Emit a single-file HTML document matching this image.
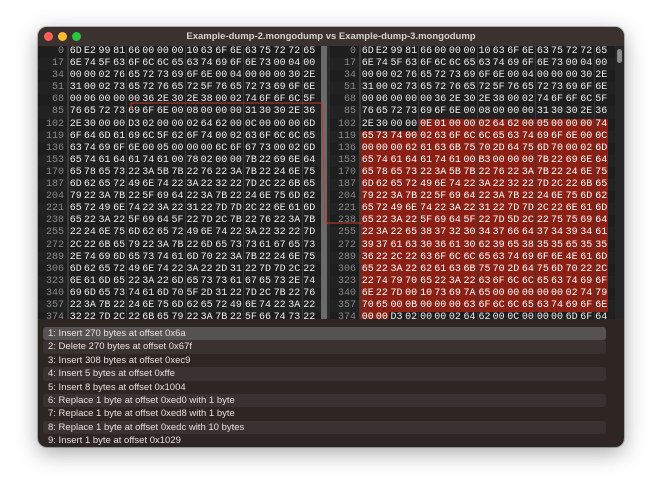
<!DOCTYPE html>
<html><head><meta charset="utf-8"><style>
*{margin:0;padding:0;box-sizing:border-box}
body{width:663px;height:500px;background:#fff;position:relative;overflow:hidden;font-family:"Liberation Sans",sans-serif}
.win{position:absolute;left:38px;top:27px;width:586px;height:420px;border-radius:9px;background:#2e2623;overflow:hidden;box-shadow:0 6px 22px rgba(0,0,0,.35),0 0 0 1px rgba(0,0,0,.25)}
.tb{position:absolute;left:0;top:0;width:586px;height:19px;background:#3b312e;color:#d8d1ce;font-weight:bold;font-size:9.5px;text-align:center;line-height:19px}
.dot{position:absolute;top:5px;width:9px;height:9px;border-radius:50%}
.pane{position:absolute;top:19px;height:273px;background:#1e1e1e;overflow:hidden;font-family:"Liberation Mono",monospace;font-size:10px;color:#ececec}
.row{height:12.1px;line-height:12.1px;display:flex;white-space:nowrap}
.row:nth-child(even){background:#222}
.row b{font-weight:normal;width:30px;text-align:right;padding-right:3px;color:#8a8a8a;border-right:1px solid #3a3a3a;flex:none}
.row i{font-style:normal;width:14.6px;text-align:center;flex:none}
.row i:nth-of-type(4n+1){border-left:1px solid #3a3a3a}
.row i.r{background:#8c1f13;color:#fff}
.sb{position:absolute;top:19px;height:273px}
.list{position:absolute;left:5px;top:300px;width:563px;font-size:9.5px;color:#e6e0dd}
.list div{height:13.4px;line-height:13.4px;padding-left:5px;border-radius:3px}
.list div:nth-child(even){background:#3a3230}
.list div.sel{background:#565251}
</style></head><body>
<div class="win">
<div class="tb">Example-dump-2.mongodump vs Example-dump-3.mongodump</div>
<div class="dot" style="left:6px;background:#ff5f57"></div>
<div class="dot" style="left:20px;background:#febc2e"></div>
<div class="dot" style="left:34px;background:#28c840"></div>

<div class="pane" style="left:0;width:283px">
<div class="row"><b>0</b><i>6D</i><i>E2</i><i>99</i><i>81</i><i>66</i><i>00</i><i>00</i><i>00</i><i>10</i><i>63</i><i>6F</i><i>6E</i><i>63</i><i>75</i><i>72</i><i>72</i><i>65</i></div>
<div class="row"><b>17</b><i>6E</i><i>74</i><i>5F</i><i>63</i><i>6F</i><i>6C</i><i>6C</i><i>65</i><i>63</i><i>74</i><i>69</i><i>6F</i><i>6E</i><i>73</i><i>00</i><i>04</i><i>00</i></div>
<div class="row"><b>34</b><i>00</i><i>00</i><i>02</i><i>76</i><i>65</i><i>72</i><i>73</i><i>69</i><i>6F</i><i>6E</i><i>00</i><i>04</i><i>00</i><i>00</i><i>00</i><i>30</i><i>2E</i></div>
<div class="row"><b>51</b><i>31</i><i>00</i><i>02</i><i>73</i><i>65</i><i>72</i><i>76</i><i>65</i><i>72</i><i>5F</i><i>76</i><i>65</i><i>72</i><i>73</i><i>69</i><i>6F</i><i>6E</i></div>
<div class="row"><b>68</b><i>00</i><i>06</i><i>00</i><i>00</i><i>00</i><i>36</i><i>2E</i><i>30</i><i>2E</i><i>38</i><i>00</i><i>02</i><i>74</i><i>6F</i><i>6F</i><i>6C</i><i>5F</i></div>
<div class="row"><b>85</b><i>76</i><i>65</i><i>72</i><i>73</i><i>69</i><i>6F</i><i>6E</i><i>00</i><i>08</i><i>00</i><i>00</i><i>00</i><i>31</i><i>30</i><i>30</i><i>2E</i><i>36</i></div>
<div class="row"><b>102</b><i>2E</i><i>30</i><i>00</i><i>00</i><i>D3</i><i>02</i><i>00</i><i>00</i><i>02</i><i>64</i><i>62</i><i>00</i><i>0C</i><i>00</i><i>00</i><i>00</i><i>6D</i></div>
<div class="row"><b>119</b><i>6F</i><i>64</i><i>6D</i><i>61</i><i>69</i><i>6C</i><i>5F</i><i>62</i><i>6F</i><i>74</i><i>00</i><i>02</i><i>63</i><i>6F</i><i>6C</i><i>6C</i><i>65</i></div>
<div class="row"><b>136</b><i>63</i><i>74</i><i>69</i><i>6F</i><i>6E</i><i>00</i><i>05</i><i>00</i><i>00</i><i>00</i><i>6C</i><i>6F</i><i>67</i><i>73</i><i>00</i><i>02</i><i>6D</i></div>
<div class="row"><b>153</b><i>65</i><i>74</i><i>61</i><i>64</i><i>61</i><i>74</i><i>61</i><i>00</i><i>78</i><i>02</i><i>00</i><i>00</i><i>7B</i><i>22</i><i>69</i><i>6E</i><i>64</i></div>
<div class="row"><b>170</b><i>65</i><i>78</i><i>65</i><i>73</i><i>22</i><i>3A</i><i>5B</i><i>7B</i><i>22</i><i>76</i><i>22</i><i>3A</i><i>7B</i><i>22</i><i>24</i><i>6E</i><i>75</i></div>
<div class="row"><b>187</b><i>6D</i><i>62</i><i>65</i><i>72</i><i>49</i><i>6E</i><i>74</i><i>22</i><i>3A</i><i>22</i><i>32</i><i>22</i><i>7D</i><i>2C</i><i>22</i><i>6B</i><i>65</i></div>
<div class="row"><b>204</b><i>79</i><i>22</i><i>3A</i><i>7B</i><i>22</i><i>5F</i><i>69</i><i>64</i><i>22</i><i>3A</i><i>7B</i><i>22</i><i>24</i><i>6E</i><i>75</i><i>6D</i><i>62</i></div>
<div class="row"><b>221</b><i>65</i><i>72</i><i>49</i><i>6E</i><i>74</i><i>22</i><i>3A</i><i>22</i><i>31</i><i>22</i><i>7D</i><i>7D</i><i>2C</i><i>22</i><i>6E</i><i>61</i><i>6D</i></div>
<div class="row"><b>238</b><i>65</i><i>22</i><i>3A</i><i>22</i><i>5F</i><i>69</i><i>64</i><i>5F</i><i>22</i><i>7D</i><i>2C</i><i>7B</i><i>22</i><i>76</i><i>22</i><i>3A</i><i>7B</i></div>
<div class="row"><b>255</b><i>22</i><i>24</i><i>6E</i><i>75</i><i>6D</i><i>62</i><i>65</i><i>72</i><i>49</i><i>6E</i><i>74</i><i>22</i><i>3A</i><i>22</i><i>32</i><i>22</i><i>7D</i></div>
<div class="row"><b>272</b><i>2C</i><i>22</i><i>6B</i><i>65</i><i>79</i><i>22</i><i>3A</i><i>7B</i><i>22</i><i>6D</i><i>65</i><i>73</i><i>73</i><i>61</i><i>67</i><i>65</i><i>73</i></div>
<div class="row"><b>289</b><i>2E</i><i>74</i><i>69</i><i>6D</i><i>65</i><i>73</i><i>74</i><i>61</i><i>6D</i><i>70</i><i>22</i><i>3A</i><i>7B</i><i>22</i><i>24</i><i>6E</i><i>75</i></div>
<div class="row"><b>306</b><i>6D</i><i>62</i><i>65</i><i>72</i><i>49</i><i>6E</i><i>74</i><i>22</i><i>3A</i><i>22</i><i>2D</i><i>31</i><i>22</i><i>7D</i><i>7D</i><i>2C</i><i>22</i></div>
<div class="row"><b>323</b><i>6E</i><i>61</i><i>6D</i><i>65</i><i>22</i><i>3A</i><i>22</i><i>6D</i><i>65</i><i>73</i><i>73</i><i>61</i><i>67</i><i>65</i><i>73</i><i>2E</i><i>74</i></div>
<div class="row"><b>340</b><i>69</i><i>6D</i><i>65</i><i>73</i><i>74</i><i>61</i><i>6D</i><i>70</i><i>5F</i><i>2D</i><i>31</i><i>22</i><i>7D</i><i>2C</i><i>7B</i><i>22</i><i>76</i></div>
<div class="row"><b>357</b><i>22</i><i>3A</i><i>7B</i><i>22</i><i>24</i><i>6E</i><i>75</i><i>6D</i><i>62</i><i>65</i><i>72</i><i>49</i><i>6E</i><i>74</i><i>22</i><i>3A</i><i>22</i></div>
<div class="row"><b>374</b><i>32</i><i>22</i><i>7D</i><i>2C</i><i>22</i><i>6B</i><i>65</i><i>79</i><i>22</i><i>3A</i><i>7B</i><i>22</i><i>5F</i><i>66</i><i>74</i><i>73</i><i>22</i></div>
</div>
<div class="sb" style="left:283px;width:6px;background:#6a6a6a"></div>
<div class="sb" style="left:289px;width:3px;background:#2a2a2a"></div>

<div class="pane" style="left:292px;width:285px">
<div class="row"><b>0</b><i>6D</i><i>E2</i><i>99</i><i>81</i><i>66</i><i>00</i><i>00</i><i>00</i><i>10</i><i>63</i><i>6F</i><i>6E</i><i>63</i><i>75</i><i>72</i><i>72</i><i>65</i></div>
<div class="row"><b>17</b><i>6E</i><i>74</i><i>5F</i><i>63</i><i>6F</i><i>6C</i><i>6C</i><i>65</i><i>63</i><i>74</i><i>69</i><i>6F</i><i>6E</i><i>73</i><i>00</i><i>04</i><i>00</i></div>
<div class="row"><b>34</b><i>00</i><i>00</i><i>02</i><i>76</i><i>65</i><i>72</i><i>73</i><i>69</i><i>6F</i><i>6E</i><i>00</i><i>04</i><i>00</i><i>00</i><i>00</i><i>30</i><i>2E</i></div>
<div class="row"><b>51</b><i>31</i><i>00</i><i>02</i><i>73</i><i>65</i><i>72</i><i>76</i><i>65</i><i>72</i><i>5F</i><i>76</i><i>65</i><i>72</i><i>73</i><i>69</i><i>6F</i><i>6E</i></div>
<div class="row"><b>68</b><i>00</i><i>06</i><i>00</i><i>00</i><i>00</i><i>36</i><i>2E</i><i>30</i><i>2E</i><i>38</i><i>00</i><i>02</i><i>74</i><i>6F</i><i>6F</i><i>6C</i><i>5F</i></div>
<div class="row"><b>85</b><i>76</i><i>65</i><i>72</i><i>73</i><i>69</i><i>6F</i><i>6E</i><i>00</i><i>08</i><i>00</i><i>00</i><i>00</i><i>31</i><i>30</i><i>30</i><i>2E</i><i>36</i></div>
<div class="row"><b>102</b><i>2E</i><i>30</i><i>00</i><i>00</i><i class="r">0E</i><i class="r">01</i><i class="r">00</i><i class="r">00</i><i class="r">02</i><i class="r">64</i><i class="r">62</i><i class="r">00</i><i class="r">05</i><i class="r">00</i><i class="r">00</i><i class="r">00</i><i class="r">74</i></div>
<div class="row"><b>119</b><i class="r">65</i><i class="r">73</i><i class="r">74</i><i class="r">00</i><i class="r">02</i><i class="r">63</i><i class="r">6F</i><i class="r">6C</i><i class="r">6C</i><i class="r">65</i><i class="r">63</i><i class="r">74</i><i class="r">69</i><i class="r">6F</i><i class="r">6E</i><i class="r">00</i><i class="r">0C</i></div>
<div class="row"><b>136</b><i class="r">00</i><i class="r">00</i><i class="r">00</i><i class="r">62</i><i class="r">61</i><i class="r">63</i><i class="r">6B</i><i class="r">75</i><i class="r">70</i><i class="r">2D</i><i class="r">64</i><i class="r">75</i><i class="r">6D</i><i class="r">70</i><i class="r">00</i><i class="r">02</i><i class="r">6D</i></div>
<div class="row"><b>153</b><i class="r">65</i><i class="r">74</i><i class="r">61</i><i class="r">64</i><i class="r">61</i><i class="r">74</i><i class="r">61</i><i class="r">00</i><i class="r">B3</i><i class="r">00</i><i class="r">00</i><i class="r">00</i><i class="r">7B</i><i class="r">22</i><i class="r">69</i><i class="r">6E</i><i class="r">64</i></div>
<div class="row"><b>170</b><i class="r">65</i><i class="r">78</i><i class="r">65</i><i class="r">73</i><i class="r">22</i><i class="r">3A</i><i class="r">5B</i><i class="r">7B</i><i class="r">22</i><i class="r">76</i><i class="r">22</i><i class="r">3A</i><i class="r">7B</i><i class="r">22</i><i class="r">24</i><i class="r">6E</i><i class="r">75</i></div>
<div class="row"><b>187</b><i class="r">6D</i><i class="r">62</i><i class="r">65</i><i class="r">72</i><i class="r">49</i><i class="r">6E</i><i class="r">74</i><i class="r">22</i><i class="r">3A</i><i class="r">22</i><i class="r">32</i><i class="r">22</i><i class="r">7D</i><i class="r">2C</i><i class="r">22</i><i class="r">6B</i><i class="r">65</i></div>
<div class="row"><b>204</b><i class="r">79</i><i class="r">22</i><i class="r">3A</i><i class="r">7B</i><i class="r">22</i><i class="r">5F</i><i class="r">69</i><i class="r">64</i><i class="r">22</i><i class="r">3A</i><i class="r">7B</i><i class="r">22</i><i class="r">24</i><i class="r">6E</i><i class="r">75</i><i class="r">6D</i><i class="r">62</i></div>
<div class="row"><b>221</b><i class="r">65</i><i class="r">72</i><i class="r">49</i><i class="r">6E</i><i class="r">74</i><i class="r">22</i><i class="r">3A</i><i class="r">22</i><i class="r">31</i><i class="r">22</i><i class="r">7D</i><i class="r">7D</i><i class="r">2C</i><i class="r">22</i><i class="r">6E</i><i class="r">61</i><i class="r">6D</i></div>
<div class="row"><b>238</b><i class="r">65</i><i class="r">22</i><i class="r">3A</i><i class="r">22</i><i class="r">5F</i><i class="r">69</i><i class="r">64</i><i class="r">5F</i><i class="r">22</i><i class="r">7D</i><i class="r">5D</i><i class="r">2C</i><i class="r">22</i><i class="r">75</i><i class="r">75</i><i class="r">69</i><i class="r">64</i></div>
<div class="row"><b>255</b><i class="r">22</i><i class="r">3A</i><i class="r">22</i><i class="r">65</i><i class="r">38</i><i class="r">37</i><i class="r">32</i><i class="r">30</i><i class="r">34</i><i class="r">37</i><i class="r">66</i><i class="r">64</i><i class="r">37</i><i class="r">34</i><i class="r">39</i><i class="r">34</i><i class="r">61</i></div>
<div class="row"><b>272</b><i class="r">39</i><i class="r">37</i><i class="r">61</i><i class="r">63</i><i class="r">30</i><i class="r">36</i><i class="r">61</i><i class="r">30</i><i class="r">62</i><i class="r">39</i><i class="r">65</i><i class="r">38</i><i class="r">35</i><i class="r">35</i><i class="r">65</i><i class="r">35</i><i class="r">35</i></div>
<div class="row"><b>289</b><i class="r">36</i><i class="r">22</i><i class="r">2C</i><i class="r">22</i><i class="r">63</i><i class="r">6F</i><i class="r">6C</i><i class="r">6C</i><i class="r">65</i><i class="r">63</i><i class="r">74</i><i class="r">69</i><i class="r">6F</i><i class="r">6E</i><i class="r">4E</i><i class="r">61</i><i class="r">6D</i></div>
<div class="row"><b>306</b><i class="r">65</i><i class="r">22</i><i class="r">3A</i><i class="r">22</i><i class="r">62</i><i class="r">61</i><i class="r">63</i><i class="r">6B</i><i class="r">75</i><i class="r">70</i><i class="r">2D</i><i class="r">64</i><i class="r">75</i><i class="r">6D</i><i class="r">70</i><i class="r">22</i><i class="r">2C</i></div>
<div class="row"><b>323</b><i class="r">22</i><i class="r">74</i><i class="r">79</i><i class="r">70</i><i class="r">65</i><i class="r">22</i><i class="r">3A</i><i class="r">22</i><i class="r">63</i><i class="r">6F</i><i class="r">6C</i><i class="r">6C</i><i class="r">65</i><i class="r">63</i><i class="r">74</i><i class="r">69</i><i class="r">6F</i></div>
<div class="row"><b>340</b><i class="r">6E</i><i class="r">22</i><i class="r">7D</i><i class="r">00</i><i class="r">10</i><i class="r">73</i><i class="r">69</i><i class="r">7A</i><i class="r">65</i><i class="r">00</i><i class="r">00</i><i class="r">00</i><i class="r">00</i><i class="r">00</i><i class="r">02</i><i class="r">74</i><i class="r">79</i></div>
<div class="row"><b>357</b><i class="r">70</i><i class="r">65</i><i class="r">00</i><i class="r">0B</i><i class="r">00</i><i class="r">00</i><i class="r">00</i><i class="r">63</i><i class="r">6F</i><i class="r">6C</i><i class="r">6C</i><i class="r">65</i><i class="r">63</i><i class="r">74</i><i class="r">69</i><i class="r">6F</i><i class="r">6E</i></div>
<div class="row"><b>374</b><i class="r">00</i><i class="r">00</i><i>D3</i><i>02</i><i>00</i><i>00</i><i>02</i><i>64</i><i>62</i><i>00</i><i>0C</i><i>00</i><i>00</i><i>00</i><i>6D</i><i>6F</i><i>64</i></div>
</div>
<div class="sb" style="left:577px;width:9px;background:#262626"></div>
<div style="position:absolute;left:579px;top:22px;width:5px;height:14px;border-radius:3px;background:#8a8a8a"></div>

<svg style="position:absolute;left:0;top:0" width="586" height="420">
<polyline points="93,76 284,76 287,196 324,196" fill="none" stroke="#c8382a" stroke-width="1"/>
<line x1="93" y1="76" x2="93" y2="82" stroke="#c8382a" stroke-width="1"/>
</svg>

<div class="list">
<div class="sel">1: Insert 270 bytes at offset 0x6a</div>
<div>2: Delete 270 bytes at offset 0x67f</div>
<div>3: Insert 308 bytes at offset 0xec9</div>
<div>4: Insert 5 bytes at offset 0xffe</div>
<div>5: Insert 8 bytes at offset 0x1004</div>
<div>6: Replace 1 byte at offset 0xed0 with 1 byte</div>
<div>7: Replace 1 byte at offset 0xed8 with 1 byte</div>
<div>8: Replace 1 byte at offset 0xedc with 10 bytes</div>
<div>9: Insert 1 byte at offset 0x1029</div>
</div>
</div>
</body></html>
